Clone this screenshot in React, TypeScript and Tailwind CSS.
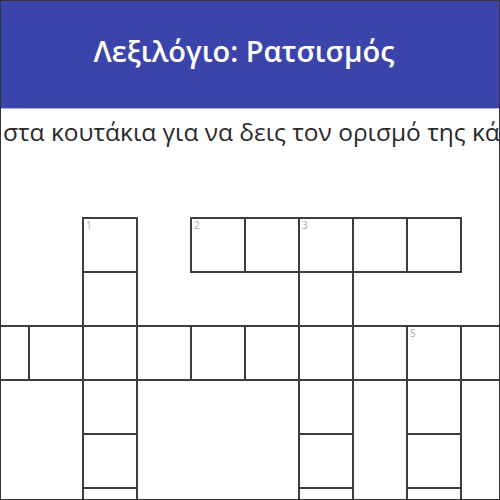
const CELLS: [number, number][] = [];

function addCell(r: number, c: number) {
  if (!CELLS.some(([rr, cc]) => rr === r && cc === c)) CELLS.push([r, c]);
}

// 1 down
for (let r = 1; r <= 6; r++) addCell(r, 3);
// 2 across
for (let c = 5; c <= 9; c++) addCell(1, c);
// 3 down
for (let r = 1; r <= 6; r++) addCell(r, 7);
// 4 across
for (let c = 1; c <= 10; c++) addCell(3, c);
// 5 down
for (let r = 3; r <= 6; r++) addCell(r, 9);

const LABELS: Record<string, string> = {
  "1,3": "1",
  "1,5": "2",
  "1,7": "3",
  "3,9": "5",
};

const COL: Record<number, string> = {
  1: "col-start-1",
  2: "col-start-2",
  3: "col-start-3",
  4: "col-start-4",
  5: "col-start-5",
  6: "col-start-6",
  7: "col-start-7",
  8: "col-start-8",
  9: "col-start-9",
  10: "col-start-10",
};

const ROW: Record<number, string> = {
  1: "row-start-1",
  2: "row-start-2",
  3: "row-start-3",
  4: "row-start-4",
  5: "row-start-5",
  6: "row-start-6",
};

function Cell({ r, c }: { r: number; c: number }) {
  const label = LABELS[`${r},${c}`];
  return (
    <div
      className={`${COL[c]} ${ROW[r]} relative w-[56px] h-[56px] border-2 border-[#3d3d3d] bg-white`}
    >
      {label && (
        <span className="absolute left-[2px] top-[1px] text-[10px] leading-none text-[#a8a8a8]">
          {label}
        </span>
      )}
    </div>
  );
}

export default function App() {
  return (
    <div
      className="w-[500px] h-[500px] overflow-hidden bg-white border border-[#333]"
      style={{ fontFamily: '"Open Sans", "Noto Sans", sans-serif' }}
    >
      <header className="h-[108px] bg-[#3b44aa] border-b border-[#aeb3e2] flex items-center justify-center pr-[12px] pb-[8px]">
        <h1 className="text-white text-[29px] leading-none font-semibold">Λεξιλόγιο: Ρατσισμός</h1>
      </header>

      <p className="mt-[11px] pl-[2px] whitespace-nowrap text-[24.5px] leading-[24px] text-[#2a2a2a]">
        στα κουτάκια για να δεις τον ορισμό της κάθε λέξης
      </p>

      <div className="mt-[73px] ml-[-27px] grid grid-cols-[repeat(10,54px)] grid-rows-[repeat(6,54px)]">
        {CELLS.map(([r, c]) => (
          <Cell key={`${r}-${c}`} r={r} c={c} />
        ))}
      </div>
    </div>
  );
}
